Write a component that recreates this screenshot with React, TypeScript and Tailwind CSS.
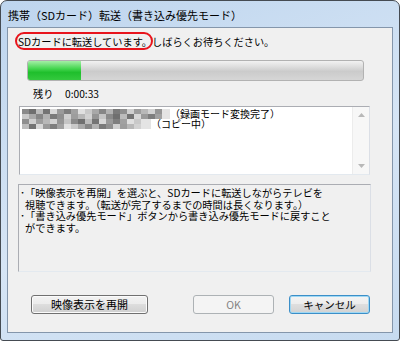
import React from "react";

const jp = "font-['Noto_Sans_CJK_JP','Noto_Sans',sans-serif]";

// pixelated (mosaic) file names in the list
const shades = [
  "#8a8a8a", "#b8b8b8", "#7a7a7a", "#c9c9c9", "#9a9a9a", "#6f6f6f", "#d2d2d2", "#8f8f8f",
  "#a8a8a8", "#7e7e7e", "#bcbcbc", "#959595", "#cfcfcf", "#868686", "#a1a1a1", "#747474",
  "#c4c4c4", "#9d9d9d", "#b2b2b2", "#e0e0e0", "#d8d8d8",
];

function Mosaic({ width, offset }: { width: number; offset: number }) {
  const cols = Math.ceil(width / 7);
  return (
    <svg width={width} height={10} className="shrink-0">
      {Array.from({ length: cols * 2 }).map((_, i) => {
        const c = i % cols;
        const r = Math.floor(i / cols);
        const fade = c > cols - 3 ? "#e4e4e4" : shades[(c * 5 + r * 3 + offset) % shades.length];
        return <rect key={i} x={c * 7} y={r * 5} width={7} height={5} fill={fade} />;
      })}
    </svg>
  );
}

function Button({ label, kind }: { label: string; kind?: "default" | "disabled" }) {
  if (kind === "disabled") {
    return (
      <div className="h-[19px] w-[81px] rounded-[3px] border border-[#adb2b5] bg-[#f4f4f4] flex items-center justify-center text-[10.5px] text-[#838383]">
        {label}
      </div>
    );
  }
  return (
    <div
      className={
        kind === "default"
          ? "h-[19px] w-[81px] rounded-[3px] border border-[#3c8fc8] shadow-[inset_0_0_0_1px_#9fd8f4] bg-[linear-gradient(to_bottom,#f4f4f4_0%,#ececec_50%,#dedede_50%,#d2d2d2_100%)] flex items-center justify-center text-[10.5px] text-black"
          : "h-[19px] w-[117px] rounded-[3px] border border-[#707070] shadow-[inset_0_0_0_1px_#fbfbfb] bg-[linear-gradient(to_bottom,#f2f2f2_0%,#ebebeb_50%,#dddddd_50%,#cfcfcf_100%)] flex items-center justify-center text-[11px] text-black"
      }
    >
      {label}
    </div>
  );
}

export default function App() {
  return (
    <div className={`w-[400px] h-[341px] bg-white ${jp}`}>
      <div className="h-full flex flex-col rounded-t-[7px] rounded-b-[3px] border border-[#454b52] bg-[linear-gradient(160deg,#bed5ee_0%,#d6e5f5_55%,#c7dbf0_100%)] px-[6px] pb-[7px]">
        {/* title bar */}
        <div className="h-[26px] shrink-0 pl-[1px] pt-[2px] flex items-center text-[11px] text-black leading-none">
          携帯（SDカード）転送（書き込み優先モード）
        </div>

        {/* client area */}
        <div className="relative flex-1 flex flex-col border border-[#8496ab] bg-[#f0f0f0] text-black">
          <div className="pl-[10px] pt-[7px] h-[21px] text-[10.2px] leading-[14px] whitespace-nowrap">
            SDカードに転送しています。しばらくお待ちください。
          </div>
          <div className="absolute left-[7px] top-[4px] w-[138px] h-[18px] rounded-full border-2 border-[#e8141c]" />

          {/* progress */}
          <div className="ml-[19px] mt-[11px] w-[337px] h-[21px] rounded-[3px] border border-[#b2b2b2] bg-[linear-gradient(to_bottom,#f2f2f2_0%,#dadada_35%,#cbcbcb_55%,#d6d6d6_100%)] overflow-hidden flex">
            <div className="w-[53px] h-full bg-[linear-gradient(to_bottom,#a4efa6_0%,#45d650_40%,#1fbf2c_60%,#34c93e_100%)]" />
          </div>

          <div className="ml-[25px] mt-[7px] h-[12px] flex items-center text-[10.2px] leading-none">
            <span className="w-[32px]">残り</span>
            <span>0:00:33</span>
          </div>

          {/* list */}
          <div className="ml-[11px] mt-[6px] w-[351px] h-[69px] border border-[#abadb3] border-r-[#dbdfe6] border-b-[#e3e9ef] bg-white flex">
            <div className="flex-1 pl-[2px] pt-[2px] text-[10px] leading-[10px]">
              <div className="flex items-center h-[10px]">
                <Mosaic width={148} offset={0} />
                <span className="whitespace-nowrap">（録画モード変換完了）</span>
              </div>
              <div className="flex items-center h-[10px]">
                <Mosaic width={129} offset={7} />
                <span className="whitespace-nowrap">（コピー中）</span>
              </div>
            </div>
            <div className="w-[17px] h-full bg-[#f7f7f7] border-l border-[#ececec] flex flex-col items-center justify-between py-[6px] text-[#b8b8b8]">
              <svg width="7" height="4" viewBox="0 0 7 4"><path d="M0 4 L3.5 0 L7 4Z" fill="currentColor" /></svg>
              <svg width="7" height="4" viewBox="0 0 7 4"><path d="M0 0 L3.5 4 L7 0Z" fill="currentColor" /></svg>
            </div>
          </div>

          {/* info */}
          <div className="ml-[10px] mt-[9px] w-[353px] h-[88px] border border-[#abadb3] border-r-[#dbdfe6] border-b-[#e3e9ef] bg-[#f0f0f0] pt-[2px] pl-[1px] text-[10.2px] leading-[11.7px]">
            <div className="flex">
              <span className="shrink-0">･</span>
              <span>「映像表示を再開」を選ぶと、SDカードに転送しながらテレビを<br />視聴できます。（転送が完了するまでの時間は長くなります。）</span>
            </div>
            <div className="flex">
              <span className="shrink-0">･</span>
              <span>「書き込み優先モード」ボタンから書き込み優先モードに戻すこと<br />ができます。</span>
            </div>
          </div>

          {/* buttons */}
          <div className="mt-[23px] flex items-center pl-[23px]">
            <Button label="映像表示を再開" />
            <div className="ml-[45px]">
              <Button label="OK" kind="disabled" />
            </div>
            <div className="ml-[15px]">
              <Button label="キャンセル" kind="default" />
            </div>
          </div>
        </div>
      </div>
    </div>
  );
}
